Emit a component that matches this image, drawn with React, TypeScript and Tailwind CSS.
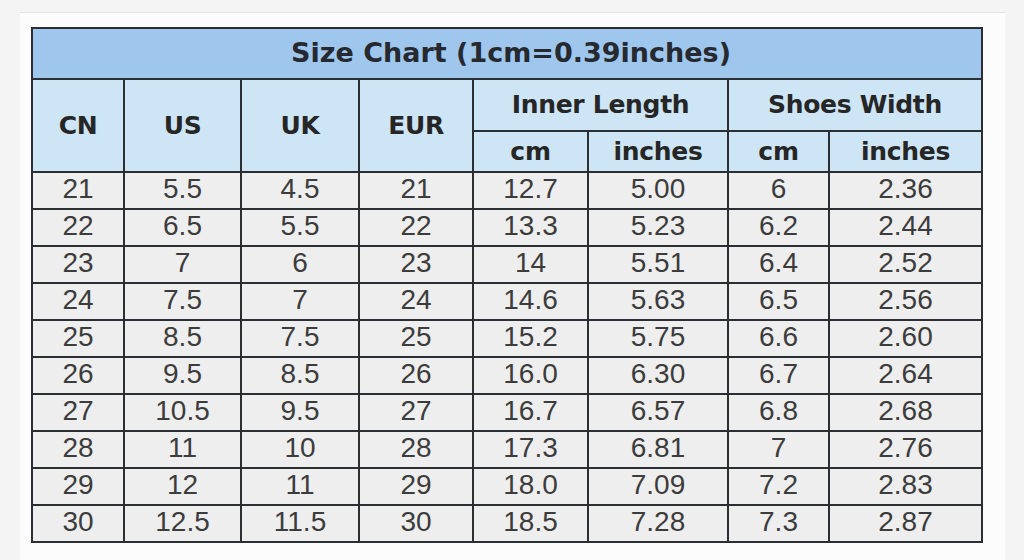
import React from "react";

const rows: string[][] = [
  ["21", "5.5", "4.5", "21", "12.7", "5.00", "6", "2.36"],
  ["22", "6.5", "5.5", "22", "13.3", "5.23", "6.2", "2.44"],
  ["23", "7", "6", "23", "14", "5.51", "6.4", "2.52"],
  ["24", "7.5", "7", "24", "14.6", "5.63", "6.5", "2.56"],
  ["25", "8.5", "7.5", "25", "15.2", "5.75", "6.6", "2.60"],
  ["26", "9.5", "8.5", "26", "16.0", "6.30", "6.7", "2.64"],
  ["27", "10.5", "9.5", "27", "16.7", "6.57", "6.8", "2.68"],
  ["28", "11", "10", "28", "17.3", "6.81", "7", "2.76"],
  ["29", "12", "11", "29", "18.0", "7.09", "7.2", "2.83"],
  ["30", "12.5", "11.5", "30", "18.5", "7.28", "7.3", "2.87"],
];

const head =
  "flex items-center justify-center bg-[#cde5f5] text-[#262626] font-bold text-[25px] font-['DejaVu_Sans',sans-serif] tracking-[-0.3px]";
const cell =
  "flex items-center justify-center pb-[3px] bg-[#eeeeee] text-[#3c3c3c] text-[28px] font-['Liberation_Sans',Arial,sans-serif] leading-none";

export default function App() {
  return (
    <div className="w-[1024px] h-[560px] bg-[#f4f4f4] overflow-hidden">
      <div className="ml-[20px] mt-[12px] w-[985px] h-[548px] bg-[#fcfcfc] border-t border-[#e4e4e4] pl-[11px] pt-[14px]">
        <div className="grid grid-cols-[90px_115px_116px_112px_113px_138px_99px_151px] grid-rows-[49px_50px_39px_repeat(10,35px)] gap-[2px] p-[2px] bg-[#2b2f33] w-fit">
          <div className="col-span-8 flex items-center justify-center pl-[8px] bg-[#9fc7ee] text-[#262a30] font-bold text-[27px] font-['DejaVu_Sans',sans-serif]">
            Size Chart (1cm=0.39inches)
          </div>
          <div className={`${head} row-span-2`}>CN</div>
          <div className={`${head} row-span-2`}>US</div>
          <div className={`${head} row-span-2`}>UK</div>
          <div className={`${head} row-span-2`}>EUR</div>
          <div className={`${head} col-span-2`}>Inner Length</div>
          <div className={`${head} col-span-2`}>Shoes Width</div>
          <div className={head}>cm</div>
          <div className={head}>inches</div>
          <div className={head}>cm</div>
          <div className={head}>inches</div>
          {rows.map((r, i) =>
            r.map((v, j) => (
              <div key={`${i}-${j}`} className={cell}>
                {v}
              </div>
            ))
          )}
        </div>
      </div>
    </div>
  );
}
